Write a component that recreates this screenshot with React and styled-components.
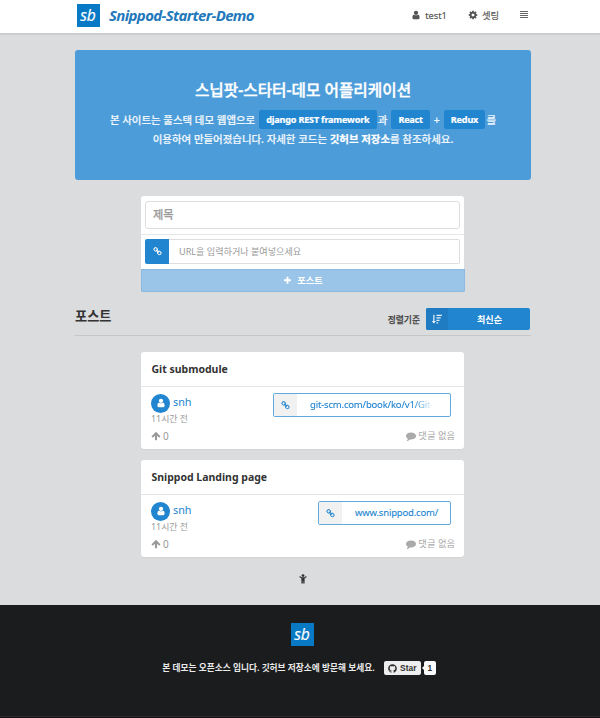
import React from 'react';
import styled, { createGlobalStyle } from 'styled-components';
import { FaSortAmountDown, FaGithub } from 'react-icons/fa';

const GlobalStyle = createGlobalStyle`
  * { box-sizing: border-box; }
  html, body { margin: 0; }
  body {
    background: #dbdcde;
    color: #333;
    font: 10px/14px 'Noto Sans', 'Noto Sans CJK KR', sans-serif;
    overflow: hidden;
  }
  h1, h2, h3, p { margin: 0; }
`;

const paths = {
  user: 'M1536 1399q0 109-62.5 187t-150.5 78h-854q-88 0-150.5-78t-62.5-187q0-85 8.5-160.5t31.5-152 58.5-131 94-89 134.5-34.5q131 128 313 128t313-128q76 0 134.5 34.5t94 89 58.5 131 31.5 152 8.5 160.5zm-256-887q0 159-112.5 271.5t-271.5 112.5-271.5-112.5-112.5-271.5 112.5-271.5 271.5-112.5 271.5 112.5 112.5 271.5z',
  up: 'M1675 971q0 51-37 90l-75 75q-38 38-91 38-54 0-90-38l-294-293v704q0 52-37.5 84.5t-90.5 32.5h-128q-53 0-90.5-32.5t-37.5-84.5v-704l-294 293q-36 38-90 38t-90-38l-75-75q-38-38-38-90 0-53 38-91l651-651q35-37 90-37 54 0 91 37l651 651q37 39 37 91z',
  comment: 'M1792 896q0 174-120 321.5t-326 233-450 85.5q-70 0-145-8-198 175-460 242-49 14-114 22-17 2-30.5-9t-17.5-29v-1q-3-4-.5-12t2-10 4.5-9.5l6-9 7-8.5 8-9q7-8 31-34.5t34.5-38 31-39.5 32.5-51 27-59 26-76q-157-89-247.5-220t-90.5-281q0-130 71-248.5t191-204.5 286-136.5 348-50.5 348 50.5 286 136.5 191 204.5 71 248.5z',
  plus: 'M1600 736v192q0 40-28 68t-68 28h-416v416q0 40-28 68t-68 28h-192q-40 0-68-28t-28-68v-416h-416q-40 0-68-28t-28-68v-192q0-40 28-68t68-28h416v-416q0-40 28-68t68-28h192q40 0 68 28t28 68v416h416q40 0 68 28t28 68z',
  cog: 'M1152 896q0-106-75-181t-181-75-181 75-75 181 75 181 181 75 181-75 75-181zm512-109v222q0 12-8 23t-20 13l-185 28q-19 54-39 91 35 50 107 138 10 12 10 25t-9 23q-27 37-99 108t-94 71q-12 0-26-9l-138-108q-44 23-91 38-16 136-29 186-7 28-36 28h-222q-14 0-24.5-8.5t-11.5-21.5l-28-184q-49-16-90-37l-141 107q-10 9-25 9-14 0-25-11-126-114-165-168-7-10-7-23 0-12 8-23 15-21 51-66.5t54-70.5q-27-50-41-99l-183-27q-13-2-21-12.5t-8-23.5v-222q0-12 8-23t19-13l186-28q14-46 39-92-40-57-107-138-10-12-10-24 0-10 9-23 26-36 98.5-107.5t94.5-71.5q13 0 26 10l138 107q44-23 91-38 16-136 29-186 7-28 36-28h222q14 0 24.5 8.5t11.5 21.5l28 184q49 16 90 37l142-107q9-9 24-9 13 0 25 10 129 119 165 170 7 8 7 22 0 12-8 23-15 21-51 66.5t-54 70.5q26 50 41 98l183 28q13 2 21 12.5t8 23.5z',
  chain: 'M1520 1216q0-40-28-68l-208-208q-28-28-68-28-42 0-72 32 3 3 19 18.5t21.5 21.5 15 19 13 25.5 3.5 27.5q0 40-28 68t-68 28q-15 0-27.5-3.5t-25.5-13-19-15-21.5-21.5-18.5-19q-33 31-33 73 0 40 28 68l206 207q27 27 68 27 40 0 68-26l147-146q28-28 28-67zm-703-705q0-40-28-68l-206-207q-28-28-68-28-39 0-68 27l-147 146q-28 28-28 67 0 40 28 68l208 208q27 27 68 27 42 0 72-31-3-3-19-18.5t-21.5-21.5-15-19-13-25.5-3.5-27.5q0-40 28-68t68-28q15 0 27.5 3.5t25.5 13 19 15 21.5 21.5 18.5 19q33-31 33-73zm895 705q0 120-85 203l-147 146q-83 83-203 83-121 0-204-85l-206-207q-83-83-83-203 0-123 88-209l-88-88q-86 88-208 88-120 0-204-84l-208-208q-84-84-84-204t85-203l147-146q83-83 203-83 121 0 204 85l206 207q83 83 83 203 0 123-88 209l88 88q86-88 208-88 120 0 204 84l208 208q84 84 84 204z',
};

const Icon = ({ name, size }) => (
  <svg viewBox="0 0 1792 1792" width={size} height={size} fill="currentColor" aria-hidden="true">
    <path d={paths[name]} />
  </svg>
);

const MenuIcon = () => (
  <svg viewBox="0 0 8 8" width="8" height="8" fill="#666" aria-hidden="true">
    <path d="M0 0h8v1H0zM0 2h8v1H0zM0 4h8v1H0zM0 6h8v1H0z" />
  </svg>
);

const ChildIcon = () => (
  <svg viewBox="0 0 8 10" width="8" height="10" fill="#333" aria-hidden="true">
    <circle cx="4" cy="1.6" r="1.4" />
    <path d="M.9 2 2.7 3.2h2.6L7.1 2l.6.9L5.6 4.5v5H4.2V7h-.4v2.5H2.4v-5L.3 2.9z" />
  </svg>
);

const Page = styled.div`
  height: 718px;
  display: flex;
  flex-direction: column;
`;

const Header = styled.header`
  flex: none;
  height: 34px;
  padding: 0 72px 3px 77px;
  display: flex;
  align-items: center;
  background: #fff;
  border-bottom: 1px solid #c9cacb;
  box-shadow: 0 1px 1px #cfd0d1;
`;

const LogoBox = styled.div`
  flex: none;
  width: 23px;
  height: 23px;
  display: flex;
  align-items: center;
  justify-content: center;
  background: #0879c4;
  color: #fff;
  font: italic 500 15.6px/23px 'Open Sans', sans-serif;
  -webkit-text-stroke: 0.2px;
  padding-right: 1px;
`;

const Brand = styled.h1`
  margin-left: 9px;
  padding-bottom: 1px;
  color: #2278bb;
  font-size: 15px;
  line-height: 20px;
  font-style: italic;
  font-weight: 700;
  letter-spacing: -0.64px;
`;

const Nav = styled.nav`
  margin-left: auto;
  height: 100%;
  display: flex;
  align-items: center;
  gap: 21px;
  color: #555;
  font-size: 9.3px;
`;

const NavItem = styled.a`
  display: flex;
  align-items: center;
  gap: 4px;
  -webkit-text-stroke: 0.15px;
  svg { margin-bottom: 1px; }
  span { padding-top: 2px; }
`;

const Hero = styled.section`
  flex: none;
  width: 456px;
  height: 130px;
  margin: 16px 0 0 75px;
  padding-top: 28px;
  border-radius: 3px;
  background: #4c9cd9;
  color: #eef6fc;
  text-align: center;
`;

const HeroTitle = styled.h2`
  color: #fff;
  font-size: 15.7px;
  line-height: 24px;
  font-weight: 500;
  -webkit-text-stroke: 0.35px;
`;

const HeroLine = styled.p`
  height: ${(p) => p.$h}px;
  display: flex;
  align-items: center;
  justify-content: center;
  font-size: 10.45px;
  font-weight: 500;
  white-space: pre;
  -webkit-text-stroke: 0.2px;
  b { color: #fff; font-weight: 700; }
`;

const Tag = styled.span`
  height: 19px;
  margin: 0 1px;
  padding: 0 7.3px;
  border-radius: 2px;
  background: #2185d0;
  color: #fff;
  font-size: 9.1px;
  line-height: 20px;
  font-weight: 700;
  letter-spacing: -0.2px;
`;

const Form = styled.form`
  flex: none;
  width: 323px;
  height: 96px;
  margin: 16px 0 0 141px;
  display: flex;
  flex-direction: column;
  border-radius: 3px;
  background: #fff;
`;

const FieldRow = styled.div`
  height: ${(p) => p.$h}px;
  padding: ${(p) => p.$top}px 4px 0;
  display: flex;
  border-bottom: ${(p) => (p.$line ? '1px solid #e6e6e6' : 'none')};
`;

const TitleField = styled.div`
  flex: 1;
  height: 28px;
  padding: 0 7px;
  border: 1px solid #dedede;
  border-radius: 3px;
  color: #999;
  font-size: 11.2px;
  line-height: 26px;
  -webkit-text-stroke: 0.35px;
`;

const LinkBadge = styled.div`
  width: 24px;
  height: 25px;
  display: grid;
  place-items: center;
  border-radius: 2px 0 0 2px;
  background: #2185d0;
  color: #fff;
`;

const UrlField = styled.div`
  flex: 1;
  height: 25px;
  padding-left: 10px;
  border: 1px solid #dedede;
  border-left: none;
  border-radius: 0 2px 2px 0;
  color: #999;
  font-size: 9.1px;
  line-height: 23px;
`;

const SubmitButton = styled.div`
  height: 23px;
  width: 324px;
  display: flex;
  align-items: center;
  justify-content: center;
  gap: 5px;
  border-radius: 0 0 2px 2px;
  background: #9ac5e9;
  box-shadow: inset 0 0 0 1px #8bb9e0;
  color: #fff;
  font-size: 9.2px;
  font-weight: 700;
`;

const SectionHead = styled.section`
  flex: none;
  width: 456px;
  height: 28px;
  margin: 16px 0 0 75px;
  display: flex;
  align-items: flex-start;
  border-bottom: 1px solid #c6c7c8;
`;

const SectionTitle = styled.h2`
  font-size: 13.2px;
  line-height: 17px;
  font-weight: 700;
`;

const SortLabel = styled.span`
  margin-left: auto;
  padding: 5px 6px 0 0;
  font-size: 8.8px;
  -webkit-text-stroke: 0.25px;
`;

const SortButton = styled.div`
  width: 104px;
  height: 22px;
  margin-right: 1px;
  display: flex;
  border-radius: 2px;
  overflow: hidden;
  background: #2185d0;
  color: #fff;
  font-size: 9.1px;
  line-height: 23px;
  font-weight: 700;
  text-align: center;
  > span { flex: 1; padding-left: 1px; }
`;

const SortIconCell = styled.div`
  width: 22px;
  display: grid;
  place-items: center;
  background: #1f7cc3;
  color: #e2eff9;
`;

const Posts = styled.main`
  flex: 1;
  display: flex;
  flex-direction: column;
  gap: 11px;
  padding: 16px 0 0 141px;
`;

const Card = styled.article`
  width: 323px;
  height: 97px;
  border-radius: 3px;
  background: #fff;
  box-shadow: 0 1px 1px #d2d3d5;
`;

const CardTitle = styled.h3`
  height: 35px;
  padding-left: 10.4px;
  border-bottom: 1px solid #e4e4e4;
  font-size: 10.5px;
  line-height: 34px;
  font-weight: 700;
`;

const CardBody = styled.div`
  height: 62px;
  padding: 6px 9px 0 10px;
  display: flex;
  flex-direction: column;
`;

const CardTop = styled.div`
  height: 36px;
  display: flex;
  justify-content: space-between;
`;

const Author = styled.div`
  display: flex;
  align-items: center;
  gap: 3px;
  height: 20px;
  color: #2185d0;
  font-size: 10.8px;
  span { padding-bottom: 2px; }
`;

const Avatar = styled.div`
  width: 19px;
  height: 19px;
  display: grid;
  place-items: center;
  border-radius: 50%;
  background: #2185d0;
  color: #fff;
`;

const Time = styled.div`
  color: #999;
  font-size: 8.9px;
  line-height: 12px;
`;

const UrlButton = styled.div`
  width: ${(p) => p.$w}px;
  height: 24px;
  margin-right: 4px;
  display: flex;
  border: 1px solid #63a9de;
  border-radius: 2px;
  color: #2185d0;
  font-size: 9.5px;
  line-height: 22px;
  letter-spacing: -0.18px;
  -webkit-text-stroke: 0.1px;
`;

const UrlIconCell = styled.div`
  width: 23px;
  display: grid;
  place-items: center;
  background: #f1f1f1;
`;

const UrlText = styled.span`
  margin-left: 13px;
  white-space: nowrap;
  mask-image: ${(p) => (p.$fade ? 'linear-gradient(90deg, #000 84%, transparent)' : 'none')};
`;

const CardFoot = styled.div`
  display: flex;
  justify-content: space-between;
  color: #aaa;
  font-size: 9.3px;
`;

const Stat = styled.span`
  display: flex;
  align-items: center;
  gap: 2px;
`;

const Votes = styled(Stat)`
  color: #999;
  font-size: 10px;
`;

const EndMark = styled.div`
  width: 323px;
  padding-top: 6px;
  display: flex;
  justify-content: center;
`;

const Footer = styled.footer`
  flex: none;
  height: 113px;
  padding-top: 18px;
  display: flex;
  flex-direction: column;
  align-items: center;
  background: #1b1c1d;
  box-shadow: inset 0 -1px 0 #191214, inset 0 -2px 0 #2b2829;
`;

const FooterLogo = styled.div`
  padding-left: 5px;
`;

const FooterRow = styled.div`
  margin: 15px 2px 0 0;
  display: flex;
  align-items: center;
  color: #eaeaea;
  font-size: 8.7px;
  font-weight: 700;
`;

const StarButton = styled.span`
  height: 14px;
  width: 37px;
  margin-left: 9px;
  display: flex;
  align-items: center;
  justify-content: center;
  gap: 3px;
  border-radius: 2px;
  background: #eee;
  color: #333;
  font: 700 8.4px/13px 'Liberation Sans', sans-serif;
`;

const StarCount = styled.span`
  position: relative;
  width: 12px;
  height: 14px;
  margin-left: 3px;
  border-radius: 2px;
  background: #fafafa;
  color: #333;
  font: 700 8.4px/15px 'Liberation Sans', sans-serif;
  text-align: center;
  &::before {
    content: '';
    position: absolute;
    left: -2px;
    top: 5px;
    border: solid transparent;
    border-width: 2px 2px 2px 0;
    border-right-color: #fafafa;
  }
`;

const posts = [
  { title: 'Git submodule', url: 'git-scm.com/book/ko/v1/Git-', width: 178, fade: true },
  { title: 'Snippod Landing page', url: 'www.snippod.com/', width: 133, fade: false },
];

const Post = ({ title, url, width, fade }) => (
  <Card>
    <CardTitle>{title}</CardTitle>
    <CardBody>
      <CardTop>
        <div>
          <Author><Avatar><Icon name="user" size={10} /></Avatar><span>snh</span></Author>
          <Time>11시간 전</Time>
        </div>
        <UrlButton $w={width}>
          <UrlIconCell><Icon name="chain" size={9} /></UrlIconCell>
          <UrlText $fade={fade}>{url}</UrlText>
        </UrlButton>
      </CardTop>
      <CardFoot>
        <Votes><Icon name="up" size={10} />0</Votes>
        <Stat><Icon name="comment" size={10} />댓글 없음</Stat>
      </CardFoot>
    </CardBody>
  </Card>
);

export default function App() {
  return (
    <Page>
      <GlobalStyle />
      <Header>
        <LogoBox>sb</LogoBox>
        <Brand>Snippod-Starter-Demo</Brand>
        <Nav>
          <NavItem><Icon name="user" size={10} /><span>test1</span></NavItem>
          <NavItem><Icon name="cog" size={10} /><span>셋팅</span></NavItem>
          <MenuIcon />
        </Nav>
      </Header>
      <Hero>
        <HeroTitle>스닙팟-스타터-데모 어플리케이션</HeroTitle>
        <HeroLine $h={35}>
          본 사이트는 풀스택 데모 웹앱으로 <Tag>django REST framework</Tag>과 <Tag>React</Tag> + <Tag>Redux</Tag>를
        </HeroLine>
        <HeroLine $h={3}>이용하여 만들어졌습니다. 자세한 코드는 <b>깃허브 저장소</b>를 참조하세요.</HeroLine>
      </Hero>
      <Form>
        <FieldRow $h={39} $top={5} $line><TitleField>제목</TitleField></FieldRow>
        <FieldRow $h={34} $top={4}>
          <LinkBadge><Icon name="chain" size={9} /></LinkBadge>
          <UrlField>URL을 입력하거나 붙여넣으세요</UrlField>
        </FieldRow>
        <SubmitButton><Icon name="plus" size={9} />포스트</SubmitButton>
      </Form>
      <SectionHead>
        <SectionTitle>포스트</SectionTitle>
        <SortLabel>정렬기준</SortLabel>
        <SortButton>
          <SortIconCell><FaSortAmountDown size={10} /></SortIconCell>
          <span>최신순</span>
        </SortButton>
      </SectionHead>
      <Posts>
        {posts.map((post) => <Post key={post.title} {...post} />)}
        <EndMark><ChildIcon /></EndMark>
      </Posts>
      <Footer>
        <FooterLogo><LogoBox>sb</LogoBox></FooterLogo>
        <FooterRow>
          본 데모는 오픈소스 입니다. 깃허브 저장소에 방문해 보세요.
          <StarButton><FaGithub size={9} />Star</StarButton>
          <StarCount>1</StarCount>
        </FooterRow>
      </Footer>
    </Page>
  );
}
